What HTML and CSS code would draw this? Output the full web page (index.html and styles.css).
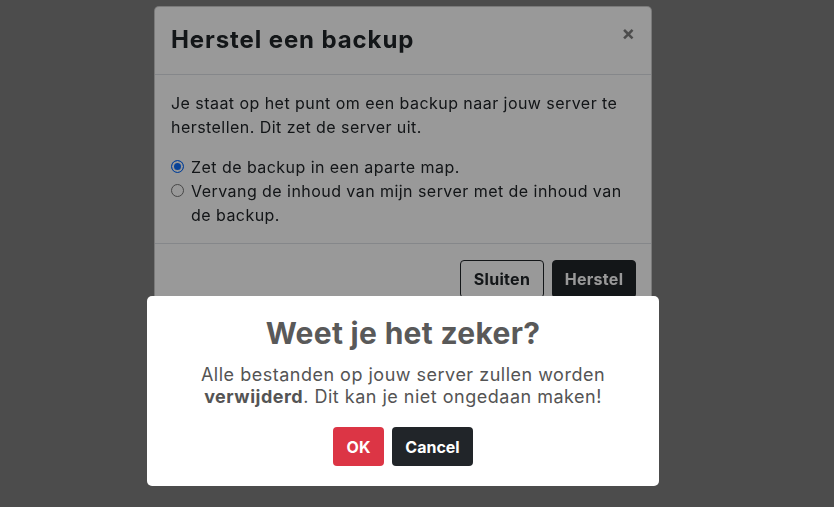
FILE: index.html
```html
<!DOCTYPE html>
<html lang="nl">
<head>
<meta charset="utf-8">
<title>Herstel een backup</title>
<link rel="stylesheet" href="styles.css">
</head>
<body>
<div class="page"></div>
<div class="backdrop"></div>
<div class="modal">
  <div class="modal-dialog">
    <div class="modal-header">
      <h5 class="modal-title">Herstel een backup</h5>
      <button class="close" type="button" aria-label="Close">&times;</button>
    </div>
    <div class="modal-body">
      <p class="intro">Je staat op het punt om een backup naar jouw server te herstellen. Dit zet de server uit.</p>
      <label class="radio-row"><span class="radio checked"></span><span>Zet de backup in een aparte map.</span></label>
      <label class="radio-row"><span class="radio"></span><span>Vervang de inhoud van mijn server met de inhoud van de backup.</span></label>
    </div>
    <div class="modal-footer">
      <button class="btn btn-outline" type="button">Sluiten</button>
      <button class="btn btn-dark" type="button">Herstel</button>
    </div>
  </div>
</div>
<div class="swal-overlay">
  <div class="swal-popup">
    <h2 class="swal-title">Weet je het zeker?</h2>
    <div class="swal-text">Alle bestanden op jouw server zullen worden <b>verwijderd</b>. Dit kan je niet ongedaan maken!</div>
    <div class="swal-actions">
      <button class="sbtn sbtn-ok" type="button">OK</button>
      <button class="sbtn sbtn-cancel" type="button">Cancel</button>
    </div>
  </div>
</div>
</body>
</html>
```
FILE: styles.css
```css
* { box-sizing: border-box; }
html, body { margin: 0; height: 100%; }
body {
  background: #fff;
  font-family: Inter, "Open Sans", "DejaVu Sans", sans-serif;
  color: #212529;
  overflow: hidden;
}
.page { height: 100%; }
.backdrop {
  position: fixed;
  inset: 0;
  background: rgba(0, 0, 0, 0.5);
}
.modal {
  position: fixed;
  inset: 0;
  padding: 6px 28px 0 0;
  display: flex;
  justify-content: center;
  align-items: flex-start;
}
.modal-dialog {
  width: 498px;
  background: #fff;
  border: 1px solid rgba(0, 0, 0, 0.2);
  border-radius: 5px;
}
.modal-header {
  display: flex;
  align-items: center;
  justify-content: space-between;
  padding: 15px 16px 16px 16px;
  border-bottom: 1px solid #dee2e6;
}
.modal-title {
  margin: 0;
  font-size: 24px;
  font-weight: 700;
  letter-spacing: 0.9px;
  line-height: 36px;
}
.close {
  border: 0;
  background: none;
  padding: 0;
  margin: -14px 0 0 0;
  font-family: Inter, sans-serif;
  font-size: 20px;
  font-weight: 700;
  color: rgba(0, 0, 0, 0.5);
  line-height: 1;
}
.modal-body {
  padding: 16px;
  font-size: 16px;
  letter-spacing: 0.45px;
  line-height: 24px;
}
.intro { margin: 0 0 16px; }
.radio-row {
  display: flex;
  align-items: flex-start;
  gap: 7px;
}
.radio {
  flex: none;
  width: 13px;
  height: 13px;
  margin-top: 5px;
  border-radius: 50%;
  border: 1px solid #767676;
  background: #fff;
}
.radio.checked {
  border: 1.5px solid #0d6efd;
  box-shadow: inset 0 0 0 2px #fff;
  background: #0d6efd;
}
.modal-footer {
  display: flex;
  justify-content: flex-end;
  gap: 8px;
  padding: 16px 15px 16px;
  border-top: 1px solid #dee2e6;
}
.btn {
  font-family: inherit;
  font-size: 16px;
  font-weight: 700;
  letter-spacing: 0.3px;
  width: 84px;
  height: 38px;
  border-radius: 4px;
  border: 1px solid #212529;
}
.btn-outline { background: transparent; color: #212529; }
.btn-dark { background: #212529; color: #fff; }

.swal-overlay {
  position: fixed;
  inset: 0;
  background: rgba(0, 0, 0, 0.4);
  padding: 296px 28px 0 0;
  display: flex;
  justify-content: center;
  align-items: flex-start;
}
.swal-popup {
  width: 512px;
  height: 190px;
  background: #fff;
  border-radius: 5px;
  padding: 17px 20px 20px;
  text-align: center;
}
.swal-title {
  margin: 0;
  font-size: 30px;
  font-weight: 700;
  letter-spacing: 0.3px;
  line-height: 40px;
  color: #595959;
}
.swal-text {
  margin-top: 11px;
  font-size: 18px;
  letter-spacing: 0.5px;
  line-height: 22px;
  color: #545454;
  padding: 0 20px;
}
.swal-text b { font-weight: 700; }
.swal-actions {
  display: flex;
  justify-content: center;
  gap: 8px;
  margin-top: 19px;
}
.sbtn {
  font-family: inherit;
  font-size: 16px;
  font-weight: 700;
  height: 39px;
  border: 0;
  border-radius: 4px;
  color: #fff;
  padding: 0;
}
.sbtn-ok { background: #dc3545; width: 51px; }
.sbtn-cancel { background: #212529; width: 81px; }
```
